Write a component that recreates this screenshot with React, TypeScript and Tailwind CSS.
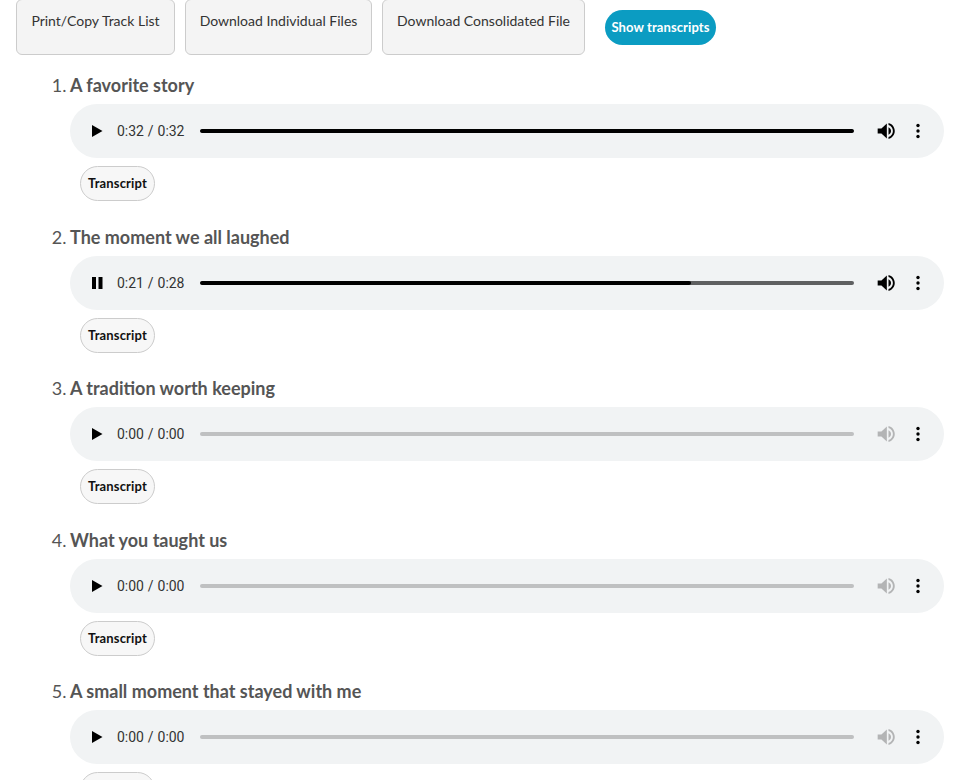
import React from 'react'

interface Track {
  title: string
  time: string
  played: number
  playing?: boolean
  loaded: boolean
}

const tracks: Track[] = [
  { title: 'A favorite story', time: '0:32 / 0:32', played: 100, loaded: true },
  { title: 'The moment we all laughed', time: '0:21 / 0:28', played: 75, playing: true, loaded: true },
  { title: 'A tradition worth keeping', time: '0:00 / 0:00', played: 0, loaded: false },
  { title: 'What you taught us', time: '0:00 / 0:00', played: 0, loaded: false },
  { title: 'A small moment that stayed with me', time: '0:00 / 0:00', played: 0, loaded: false },
]

function Player({ track }: { track: Track }) {
  return (
    <div className="flex h-[54px] items-center rounded-[27px] bg-[#f1f3f4] pl-[21px] pr-[24px] text-[#111]">
      <svg width="12" height="14" viewBox="0 0 12 14" className="shrink-0">
        {track.playing ? (
          <path d="M1 1h4v12H1zM7.500 1h4v12h-4z" fill="#000" />
        ) : (
          <path d="M1 1l10.500 6L1 13z" fill="#000" />
        )}
      </svg>
      <span className="ml-[14px] w-[67px] shrink-0 whitespace-nowrap font-['Roboto',sans-serif] text-[14px] tracking-[-0.05px] text-[#333] [word-spacing:0.6px]">{track.time}</span>
      <div className={`ml-[16px] h-[4px] flex-1 overflow-hidden rounded-full ${track.loaded ? 'bg-[#5f6061]' : 'bg-[#bfc0c1]'}`}>
        <div className="h-full rounded-full bg-[#000]" style={{ width: `${track.played}%` }} />
      </div>
      <svg width="20" height="20" viewBox="0 0 24 24" className="ml-[22px] shrink-0" fill={track.loaded ? '#000' : '#b3b4b5'}>
        <path d="M2 9v6h4.500L13 21V3L6.500 9H2z" />
        <path d="M15 7.600v8.800c1.800-.8 3-2.500 3-4.400s-1.200-3.600-3-4.400z" />
        <path d="M15 2.500v2.300c3.100.9 5.300 3.800 5.300 7.200s-2.200 6.300-5.300 7.200v2.300c4.300-1 7.500-4.800 7.500-9.500S19.300 3.500 15 2.500z" />
      </svg>
      <svg width="4" height="16" viewBox="0 0 4 16" className="ml-[20px] shrink-0" fill="#000">
        <circle cx="2" cy="2.500" r="1.700" />
        <circle cx="2" cy="8" r="1.700" />
        <circle cx="2" cy="13.500" r="1.700" />
      </svg>
    </div>
  )
}

export default function App() {
  return (
    <div className="h-[780px] overflow-hidden bg-white font-['Lato',sans-serif]">
      <div className="flex items-start pl-[16px]">
        <button className="mt-[-1px] h-[56px] w-[159px] rounded-[6px] border border-[#ccc] bg-[#f4f4f4] pb-[14px] text-[14px] text-[#333]">Print/Copy Track List</button>
        <button className="ml-[10px] mt-[-1px] h-[56px] w-[187px] rounded-[6px] border border-[#ccc] bg-[#f4f4f4] pb-[14px] text-[14px] text-[#333]">Download Individual Files</button>
        <button className="ml-[10px] mt-[-1px] h-[56px] w-[203px] rounded-[6px] border border-[#ccc] bg-[#f4f4f4] pb-[14px] text-[14px] text-[#333]">Download Consolidated File</button>
        <button className="ml-[20px] mt-[10px] h-[35px] w-[111px] rounded-[18px] bg-[#0b9cc2] text-[13px] font-bold tracking-[0.1px] text-white">Show transcripts</button>
      </div>
      <ol className="mt-[17px] list-decimal pl-[70px] pr-[16px] text-[18px] leading-[26px] text-[#555] [word-spacing:-1px] marker:font-normal">
        {tracks.map(track => (
          <li key={track.title} className="mb-[22.6px]">
            <div className="mb-[6px] font-bold [word-spacing:0]">{track.title}</div>
            <Player track={track} />
            <button className="ml-[10px] mt-[8px] block h-[35px] w-[75px] rounded-[18px] border border-[#ccc] bg-[#f7f7f7] text-[13px] font-bold leading-none tracking-[0.15px] text-[#111]">Transcript</button>
          </li>
        ))}
      </ol>
    </div>
  )
}
